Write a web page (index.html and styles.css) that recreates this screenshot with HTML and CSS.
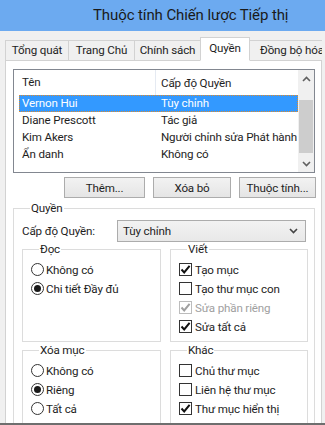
FILE: index.html
```html
<!DOCTYPE html>
<html>
<head>
    <title>Thuộc tính Chiến lược Tiếp thị</title>
    <link rel="stylesheet" href="styles.css">
</head>
<body>
    <div class="titlebar">Thuộc tính Chiến lược Tiếp thị</div>

    <div class="dialog">
        <div class="tabs">
            <div class="tab tab-general">Tổng quát</div>
            <div class="tab tab-home">Trang Chủ</div>
            <div class="tab tab-policy">Chính sách</div>
            <div class="tab tab-perm active">Quyền</div>
            <div class="tab tab-sync">Đồng bộ hóa</div>
        </div>

        <div class="panel">
            <div class="listbox">
                <div class="list-main">
                    <div class="list-head">
                        <span class="head-name">Tên</span>
                        <span class="head-level">Cấp độ Quyền</span>
                    </div>
                    <div class="list-row selected"><span>Vernon Hui</span><span>Tùy chỉnh</span></div>
                    <div class="list-row"><span>Diane Prescott</span><span>Tác giả</span></div>
                    <div class="list-row"><span>Kim Akers</span><span>Người chỉnh sửa Phát hành</span></div>
                    <div class="list-row"><span>Ẩn danh</span><span>Không có</span></div>
                </div>
                <div class="scrollbar">
                    <div class="scroll-arrow">
                        <svg width="9" height="6" viewBox="0 0 9 6"><path d="M1 5 L4.5 1.5 L8 5" fill="none" stroke="#606060" stroke-width="1.6"/></svg>
                    </div>
                    <div class="scroll-track"><div class="scroll-thumb"></div></div>
                    <div class="scroll-arrow">
                        <svg width="9" height="6" viewBox="0 0 9 6"><path d="M1 1 L4.5 4.5 L8 1" fill="none" stroke="#606060" stroke-width="1.6"/></svg>
                    </div>
                </div>
            </div>

            <div class="buttons">
                <button class="btn btn-add">Thêm...</button>
                <button class="btn btn-remove">Xóa bỏ</button>
                <button class="btn btn-props">Thuộc tính...</button>
            </div>

            <fieldset class="group">
                <legend>Quyền</legend>
                <div class="level-row">
                    <span class="level-label">Cấp độ Quyền:</span>
                    <div class="select">
                        <span>Tùy chỉnh</span>
                        <svg width="9" height="6" viewBox="0 0 9 6"><path d="M1 1 L4.5 4.5 L8 1" fill="none" stroke="#444" stroke-width="1.6"/></svg>
                    </div>
                </div>

                <div class="subgroups">
                    <fieldset class="subgroup">
                        <legend>Đọc</legend>
                        <div class="option"><span class="radio"></span>Không có</div>
                        <div class="option"><span class="radio checked"></span>Chi tiết Đầy đủ</div>
                    </fieldset>

                    <fieldset class="subgroup">
                        <legend>Viết</legend>
                        <div class="option"><span class="check checked"></span>Tạo mục</div>
                        <div class="option"><span class="check"></span>Tạo thư mục con</div>
                        <div class="option disabled"><span class="check checked"></span>Sửa phần riêng</div>
                        <div class="option"><span class="check checked"></span>Sửa tất cả</div>
                    </fieldset>

                    <fieldset class="subgroup">
                        <legend>Xóa mục</legend>
                        <div class="option"><span class="radio"></span>Không có</div>
                        <div class="option"><span class="radio checked"></span>Riêng</div>
                        <div class="option"><span class="radio"></span>Tất cả</div>
                    </fieldset>

                    <fieldset class="subgroup">
                        <legend>Khác</legend>
                        <div class="option"><span class="check"></span>Chủ thư mục</div>
                        <div class="option"><span class="check"></span>Liên hệ thư mục</div>
                        <div class="option"><span class="check checked"></span>Thư mục hiển thị</div>
                    </fieldset>
                </div>
            </fieldset>
        </div>
    </div>
</body>
</html>
```

FILE: styles.css
```css
* {
    box-sizing: border-box;
}

html, body {
    height: 100%;
}

body {
    margin: 0;
    padding: 0;
    font-family: Roboto, "Noto Sans", Arial, sans-serif;
    font-size: 11.6px;
    letter-spacing: -0.15px;
    color: #1e1e1e;
    background-color: #f0f0f0;
    overflow: hidden;
}

.titlebar {
    height: 31px;
    line-height: 31px;
    padding-left: 93px;
    background-color: #6caaf0;
    color: #1a1a1a;
    font-size: 15px;
    letter-spacing: -0.1px;
    white-space: nowrap;
}

.dialog {
    height: 394px;
    padding: 5px 3px 0 5px;
    overflow: hidden;
    border-bottom: 2px solid #6e6e6e;
}

.tabs {
    display: flex;
    align-items: flex-end;
    height: 24px;
    white-space: nowrap;
    position: relative;
    z-index: 1;
}

.tab {
    height: 21px;
    line-height: 19px;
    padding: 0;
    text-align: center;
    margin-bottom: -1px;
    border: 1px solid #d2d2d2;
    border-right: none;
    background-color: #f0f0f0;
}

.tab-general {
    width: 63px;
}

.tab-home {
    width: 66px;
}

.tab-policy {
    width: 66px;
}

.tab.active {
    width: 50px;
    height: 24px;
    line-height: 20px;
    background-color: #fff;
    border-right: 1px solid #d2d2d2;
    border-bottom: 1px solid #fff;
}

.tab-sync {
    flex: 1;
    border-left: none;
    text-align: left;
    padding-left: 10px;
    overflow: hidden;
}

.panel {
    height: 400px;
    background-color: #fff;
    border: 1px solid #d2d2d2;
    padding: 8px 6px 0 7px;
}

.listbox {
    display: flex;
    height: 104px;
    border: 1px solid #828790;
}

.list-main {
    flex: 1;
}

.list-head {
    display: flex;
    height: 25px;
    align-items: center;
}

.head-name {
    width: 142px;
    padding-left: 8px;
    height: 25px;
    line-height: 25px;
    border-right: 1px solid #e5eaf2;
}

.head-level {
    padding-left: 5px;
}

.list-row {
    display: grid;
    grid-template-columns: 139px 1fr;
    height: 17px;
    line-height: 15px;
    margin-left: 5px;
    padding-left: 2px;
    border: 1px solid transparent;
    white-space: nowrap;
}

.list-row.selected {
    background-color: #3399ff;
    color: #fff;
    border: 1px dotted #e08a2a;
}

.scrollbar {
    width: 17px;
    display: flex;
    flex-direction: column;
    background-color: #f0f0f0;
}

.scroll-arrow {
    height: 17px;
    display: flex;
    align-items: center;
    justify-content: center;
}

.scroll-track {
    flex: 1;
    padding: 13px 1px 0 1px;
}

.scroll-thumb {
    height: 53px;
    background-color: #cdcdcd;
}

.buttons {
    display: flex;
    justify-content: flex-end;
    gap: 8px;
    margin-top: 4px;
}

.btn {
    height: 21px;
    padding: 0;
    font-family: inherit;
    font-size: 11.6px;
    letter-spacing: -0.15px;
    color: #1e1e1e;
    border: 1px solid #acacac;
    background: linear-gradient(#f2f2f2, #e5e5e5);
}

.btn-add {
    width: 81px;
}

.btn-remove {
    width: 78px;
}

.btn-props {
    width: 77px;
    margin-right: -1px;
}

.group {
    margin: 3px 0 0 0;
    padding: 0 8px 0 8px;
    border: 1px solid #dcdcdc;
    min-width: 0;
}

.group legend,
.subgroup legend {
    padding: 0 1px;
    margin-left: 8px;
    line-height: 15px;
}

.level-row {
    display: flex;
    align-items: center;
    margin-top: 4px;
}

.level-label {
    width: 95px;
}

.select {
    flex: 1;
    height: 22px;
    display: flex;
    align-items: center;
    justify-content: space-between;
    padding: 0 7px 0 5px;
    border: 1px solid #acacac;
    background: linear-gradient(#f2f2f2, #e8e8e8);
}

.subgroups {
    display: grid;
    grid-template-columns: 139px 138px;
    column-gap: 9px;
    row-gap: 1px;
    margin-top: 0;
}

.subgroup {
    margin: 0;
    padding: 3px 8px 5px 8px;
    border: 1px solid #dcdcdc;
    min-width: 0;
}

.option {
    display: flex;
    align-items: center;
    height: 19px;
    white-space: nowrap;
}

.option.disabled {
    color: #a0a0a0;
}

.radio {
    width: 13px;
    height: 13px;
    margin-right: 2px;
    border: 1px solid #333;
    border-radius: 50%;
    display: flex;
    align-items: center;
    justify-content: center;
    background-color: #fff;
}

.radio.checked::after {
    content: "";
    width: 7px;
    height: 7px;
    border-radius: 50%;
    background-color: #1a1a1a;
}

.check {
    width: 13px;
    height: 13px;
    margin-right: 3px;
    border: 1px solid #333;
    background-color: #fff;
    display: flex;
    align-items: center;
    justify-content: center;
}

.check.checked::after {
    content: "";
    width: 11px;
    height: 11px;
    background: url("data:image/svg+xml;utf8,<svg xmlns='http://www.w3.org/2000/svg' viewBox='0 0 11 11'><path d='M1.5 5.5 L4.2 8.4 L9.6 1.8' fill='none' stroke='%23111' stroke-width='2'/></svg>") no-repeat center;
}

.option.disabled .check {
    border-color: #bcbcbc;
}

.option.disabled .check.checked::after {
    background: url("data:image/svg+xml;utf8,<svg xmlns='http://www.w3.org/2000/svg' viewBox='0 0 11 11'><path d='M1.5 5.5 L4.2 8.4 L9.6 1.8' fill='none' stroke='%23a0a0a0' stroke-width='2'/></svg>") no-repeat center;
}
```
